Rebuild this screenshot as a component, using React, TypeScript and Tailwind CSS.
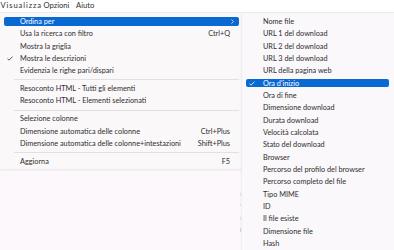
import React from "react";

type Item = { label: string; shortcut?: string; checked?: boolean; active?: boolean; sub?: boolean } | "sep";

const mainItems: Item[] = [
  { label: "Ordina per", active: true, sub: true },
  { label: "Usa la ricerca con filtro", shortcut: "Ctrl+Q" },
  { label: "Mostra la griglia" },
  { label: "Mostra le descrizioni", checked: true },
  { label: "Evidenzia le righe pari/dispari" },
  "sep",
  { label: "Resoconto HTML - Tutti gli elementi" },
  { label: "Resoconto HTML - Elementi selezionati" },
  "sep",
  { label: "Selezione colonne" },
  { label: "Dimensione automatica delle colonne", shortcut: "Ctrl+Plus" },
  { label: "Dimensione automatica delle colonne+intestazioni", shortcut: "Shift+Plus" },
  "sep",
  { label: "Aggiorna", shortcut: "F5" },
];

const subItems: Item[] = [
  { label: "Nome file" },
  { label: "URL 1 del download" },
  { label: "URL 2 del download" },
  { label: "URL 3 del download" },
  { label: "URL della pagina web" },
  { label: "Ora d'inizio", active: true, checked: true },
  { label: "Ora di fine" },
  { label: "Dimensione download" },
  { label: "Durata download" },
  { label: "Velocità calcolata" },
  { label: "Stato del download" },
  { label: "Browser" },
  { label: "Percorso del profilo del browser" },
  { label: "Percorso completo del file" },
  { label: "Tipo MIME" },
  { label: "ID" },
  { label: "Il file esiste" },
  { label: "Dimensione file" },
  { label: "Hash" },
];

function Check({ white }: { white?: boolean }) {
  return (
    <svg width="6" height="5" viewBox="0 0 6 5" className="block">
      <polyline points="0.5,2.6 2,4.2 5.5,0.6" fill="none" stroke={white ? "#ffffff" : "#333333"} strokeWidth="0.8" />
    </svg>
  );
}

function MenuRow({ item, textLeft, checkLeft }: { item: Exclude<Item, "sep">; textLeft: number; checkLeft: number }) {
  return (
    <div className="relative h-[12.33px] flex items-center">
      {item.active && <div className="absolute inset-x-0 top-[1.6px] bottom-[2.2px] rounded-[2px] bg-[#0a68d3]" />}
      {item.checked && (
        <div className="absolute top-[3.8px]" style={{ left: checkLeft }}>
          <Check white={item.active} />
        </div>
      )}
      <span
        className={`relative whitespace-nowrap ${item.active ? "text-white" : "text-[#2e2e2e]"}`}
        style={{ paddingLeft: textLeft }}
      >
        {item.label}
      </span>
      {item.shortcut && (
        <span className="relative ml-auto pr-[9px] whitespace-nowrap text-[#2e2e2e]">{item.shortcut}</span>
      )}
      {item.sub && (
        <svg width="3" height="5" viewBox="0 0 3 5" className="relative ml-auto mr-[5px]">
          <polyline points="0.5,0.5 2.5,2.5 0.5,4.5" fill="none" stroke="#ffffff" strokeWidth="0.7" />
        </svg>
      )}
    </div>
  );
}

export default function App() {
  return (
    <div
      className="relative w-[394px] h-[250px] overflow-hidden bg-[#fcf8fb] text-[7.3px] leading-none"
      style={{ fontFamily: 'Lato, "Noto Sans", sans-serif' }}
    >
      {/* menu bar */}
      <div className="h-[13px] bg-white border-b border-[#ececec] flex items-center text-[#2e2e2e] text-[7.6px]">
        <span className="w-[43.5px] pl-[0.5px] tracking-[0.9px]">Visualizza</span>
        <span className="w-[32.5px]">Opzioni</span>
        <span>Aiuto</span>
      </div>

      {/* clipped content of the window behind */}
      <div className="absolute left-[240px] top-[192px] flex flex-col gap-[7px] text-[#a0a0a0] text-[5px]">
        <span>:</span>
        <span>'</span>
        <span>:</span>
        <span>l</span>
      </div>

      {/* main dropdown */}
      <div className="absolute left-0 top-[14px] w-[243px] bg-[#fbf8fa] px-[4px] pt-[1.5px] pb-[1.5px] shadow-[0_1px_2px_rgba(0,0,0,0.08)]">
        {mainItems.map((it, i) =>
          it === "sep" ? (
            <div key={i} className="h-[5.5px] flex items-center pl-[10px]">
              <div className="h-px w-full bg-[#e3e0e3]" />
            </div>
          ) : (
            <MenuRow key={i} item={it} textLeft={16} checkLeft={3} />
          )
        )}
      </div>

      {/* submenu */}
      <div className="absolute left-[242px] top-[14px] w-[152px] h-[240px] bg-[#faf8fa] pl-[4px] pr-[5px] pt-[1.5px] shadow-[-1px_0_2px_rgba(0,0,0,0.06)]">
        {subItems.map((it, i) =>
          it === "sep" ? null : <MenuRow key={i} item={it} textLeft={17} checkLeft={3} />
        )}
      </div>
    </div>
  );
}
